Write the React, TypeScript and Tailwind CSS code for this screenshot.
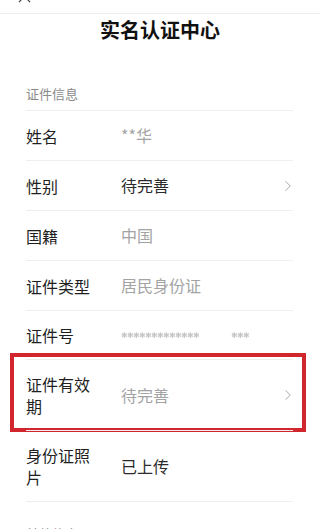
import { ChevronRight } from "lucide-react";

type Row = {
  label: string;
  value?: string;
  tone?: "muted" | "dark";
  arrow?: boolean;
  masked?: boolean;
  highlight?: boolean;
};

const rows: Row[] = [
  { label: "姓名", value: "**华", tone: "muted" },
  { label: "性别", value: "待完善", tone: "dark", arrow: true },
  { label: "国籍", value: "中国", tone: "muted" },
  { label: "证件类型", value: "居民身份证", tone: "muted" },
  { label: "证件号", masked: true },
  { label: "证件有效期", value: "待完善", tone: "muted", arrow: true, highlight: true },
  { label: "身份证照片", value: "已上传", tone: "dark" },
];

function InfoRow({ row }: { row: Row }) {
  return (
    <div className="relative flex items-center border-t border-[#efefef] py-[13px]">
      <div className="w-[66px] shrink-0 text-[16px] leading-[22px] text-[#1f1f1f]">
        {row.label}
      </div>
      <div className="ml-[29px] flex-1 text-[16px] leading-[23px]">
        {row.masked ? (
          <div className="flex items-start text-[8px] leading-[20px] tracking-[-1px] text-[#c8c8c8] blur-[0.7px]">
            <span>✱✱✱✱✱✱✱✱✱✱✱✱✱</span>
            <span className="ml-[32px]">✱✱✱</span>
          </div>
        ) : (
          <span className={row.tone === "dark" ? "text-[#2b2b2b]" : "text-[#a3a3a3]"}>
            {row.value}
          </span>
        )}
      </div>
      {row.arrow && (
        <ChevronRight className="-mr-[4px] size-[18px] text-[#a8a8a8]" strokeWidth={1.3} />
      )}
      {row.highlight && (
        <div className="pointer-events-none absolute -top-[7px] -bottom-[2px] -left-[16px] -right-[13px] border-[4px] border-[#d2262e]" />
      )}
    </div>
  );
}

export default function App() {
  return (
    <div
      className="min-h-screen overflow-hidden bg-white"
      style={{ fontFamily: '"Noto Sans CJK SC", "Noto Sans", sans-serif' }}
    >
      <div className="flex h-[14px] items-end overflow-hidden border-b border-[#ececec] pl-[18px]">
        <svg viewBox="0 0 14 14" className="mb-[10px] size-[13px] text-[#444]" fill="none" stroke="currentColor" strokeWidth="1.3">
          <path d="M1 1l12 12M13 1L1 13" />
        </svg>
      </div>

      <h1 className="flex h-[32px] items-center justify-center text-[20px] font-bold text-[#111]">
        实名认证中心
      </h1>

      <div className="ml-[26px] mr-[27px]">
        <p className="mt-[38px] mb-[6px] text-[13px] leading-[20px] text-[#8a8a8a]">证件信息</p>
        <div className="border-b border-[#efefef]">
          {rows.map((row) => (
            <InfoRow key={row.label} row={row} />
          ))}
        </div>
        <p className="mt-[22px] text-[13px] leading-[20px] text-[#8a8a8a]">其他信息</p>
      </div>
    </div>
  );
}
